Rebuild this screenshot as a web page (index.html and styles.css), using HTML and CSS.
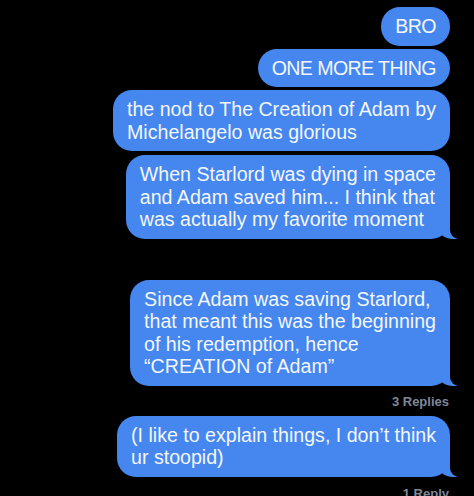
FILE: index.html
```html
<!DOCTYPE html>
<html>
<head>
  <meta charset="UTF-8">
  <title>Messages</title>
  <link rel="stylesheet" href="styles.css">
</head>
<body>
  <div class="thread">
    <div class="bubble caps">BRO</div>
    <div class="bubble caps">ONE MORE THING</div>
    <div class="bubble">the nod to The Creation of Adam by<br>Michelangelo was glorious</div>
    <div class="bubble tail gap-sm">When Starlord was dying in space<br>and Adam saved him... I think that<br>was actually my favorite moment</div>

    <div class="bubble tail gap-lg">Since Adam was saving Starlord,<br>that meant this was the beginning<br>of his redemption, hence<br>“CREATION of Adam”</div>
    <div class="replies">3 Replies</div>

    <div class="bubble tail">(I like to explain things, I don’t think<br>ur stoopid)</div>
    <div class="replies last">1 Reply</div>
  </div>
</body>
</html>
```
FILE: styles.css
```css
body {
  margin: 0;
  background: #000;
  font-family: 'Liberation Sans', Arial, sans-serif;
  overflow: hidden;
}
.thread {
  display: flex;
  flex-direction: column;
  align-items: flex-end;
  gap: 3px;
  padding: 7px 24px 0 0;
}
.bubble {
  position: relative;
  background: #4587ef;
  color: #f4f6fa;
  font-size: 19.6px;
  line-height: 22.5px;
  padding: 8px 14px;
  border-radius: 19px;
  white-space: nowrap;
}
.caps {
  letter-spacing: -0.6px;
}
.gap-sm {
  margin-top: 1px;
}
.gap-lg {
  margin-top: 38px;
}
/* little curl at the bottom right */
.tail::before {
  content: "";
  position: absolute;
  bottom: 0;
  right: -7px;
  width: 20px;
  height: 18px;
  background: #4587ef;
  border-bottom-left-radius: 15px;
}
.tail::after {
  content: "";
  position: absolute;
  bottom: 0;
  right: -10px;
  width: 10px;
  height: 18px;
  background: #000;
  border-bottom-left-radius: 9px;
}
.replies {
  color: #7f8799;
  font-size: 13px;
  font-weight: bold;
  line-height: 15px;
  padding: 5px 1px 4px 0;
}
.last {
  padding-top: 6px;
}
```
